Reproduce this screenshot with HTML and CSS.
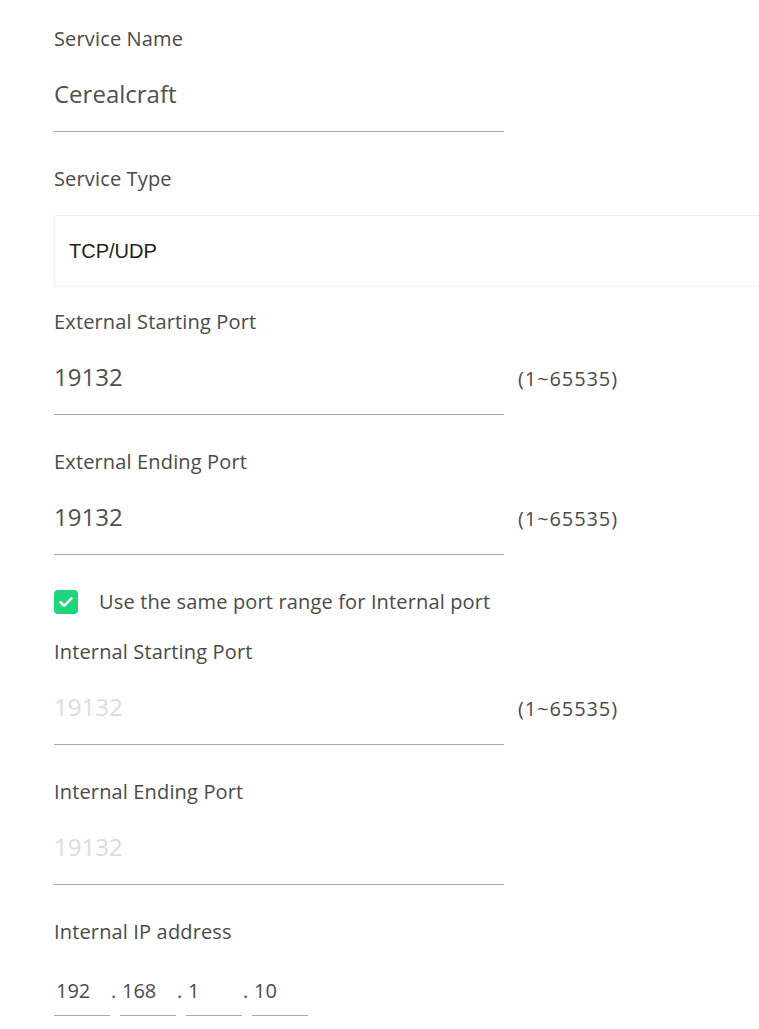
FILE: index.html
```html
<!DOCTYPE html>
<html>
<head>
<meta charset="utf-8">
<link rel="stylesheet" href="styles.css">
</head>
<body>
<div class="form">
  <div class="field">
    <div class="label">Service Name</div>
    <div class="row"><div class="input">Cerealcraft</div></div>
  </div>
  <div class="field select-field">
    <div class="label">Service Type</div>
    <div class="select">TCP/UDP</div>
  </div>
  <div class="field">
    <div class="label">External Starting Port</div>
    <div class="row"><div class="input">19132</div><span class="hint">(1~65535)</span></div>
  </div>
  <div class="field">
    <div class="label">External Ending Port</div>
    <div class="row"><div class="input">19132</div><span class="hint">(1~65535)</span></div>
  </div>
  <div class="check-row">
    <span class="checkbox"><svg viewBox="0 0 24 24" width="24" height="24"><rect width="24" height="24" rx="4" fill="#1fd67b"/><path d="M6.5 12.3l3.6 3.5 7.4-7.4" fill="none" stroke="#fff" stroke-width="2.6" stroke-linecap="round" stroke-linejoin="round"/></svg></span>
    <span class="check-text">Use the same port range for Internal port</span>
  </div>
  <div class="field">
    <div class="label">Internal Starting Port</div>
    <div class="row"><div class="input disabled">19132</div><span class="hint">(1~65535)</span></div>
  </div>
  <div class="field">
    <div class="label">Internal Ending Port</div>
    <div class="row"><div class="input disabled">19132</div></div>
  </div>
  <div class="field">
    <div class="label">Internal IP address</div>
    <div class="ip-row">
      <div class="ip">192</div><span class="dot">.</span>
      <div class="ip">168</div><span class="dot">.</span>
      <div class="ip">1</div><span class="dot">.</span>
      <div class="ip">10</div>
    </div>
  </div>
</div>
</body>
</html>
```
FILE: styles.css
```css
html, body {
  margin: 0;
  padding: 0;
  background: #fff;
  overflow: hidden;
}
body {
  font-family: "Open Sans", "Noto Sans", sans-serif;
  color: #4a4a4a;
}
.form {
  padding: 25px 0 0 54px;
}
.field {
  margin-bottom: 33px;
}
.select-field {
  margin-bottom: 21px;
}
.label {
  font-size: 20px;
  letter-spacing: 0.15px;
  line-height: 28px;
  color: #4a4a4a;
}
.row {
  display: flex;
  align-items: flex-end;
}
.input {
  width: 450px;
  box-sizing: border-box;
  height: 79px;
  padding-top: 24px;
  font-size: 24px;
  line-height: 34px;
  color: #4f4f4f;
  border-bottom: 1px solid #a8a8a8;
}
.input.disabled {
  color: #dcdcdc;
}
.hint {
  font-size: 20px;
  letter-spacing: 0.9px;
  line-height: 28px;
  color: #4a4a4a;
  margin-left: 14px;
  margin-bottom: 22px;
}
.select {
  margin-top: 22px;
  box-sizing: border-box;
  height: 72px;
  border: 1px solid #eeeeee;
  border-right: none;
  border-radius: 3px 0 0 3px;
  padding-left: 14px;
  display: flex;
  align-items: center;
  font-family: "Liberation Sans", Arial, sans-serif;
  font-size: 20px;
  color: #1e1e1e;
}
.check-row {
  display: flex;
  align-items: center;
  height: 24px;
  margin-top: 35px;
  margin-bottom: 24px;
}
.checkbox {
  width: 24px;
  height: 24px;
  display: flex;
}
.check-text {
  margin-left: 21px;
  font-size: 20px;
  letter-spacing: 0.15px;
  line-height: 28px;
  color: #4a4a4a;
}
.ip-row {
  display: flex;
  align-items: flex-end;
}
.ip {
  width: 56px;
  box-sizing: border-box;
  height: 70px;
  padding-top: 28px;
  padding-left: 2px;
  font-size: 20px;
  line-height: 34px;
  color: #4a4a4a;
  border-bottom: 1px solid #a8a8a8;
}
.dot {
  width: 10px;
  font-size: 20px;
  line-height: 34px;
  margin-bottom: 8px;
  padding-left: 1px;
  box-sizing: border-box;
}
```
